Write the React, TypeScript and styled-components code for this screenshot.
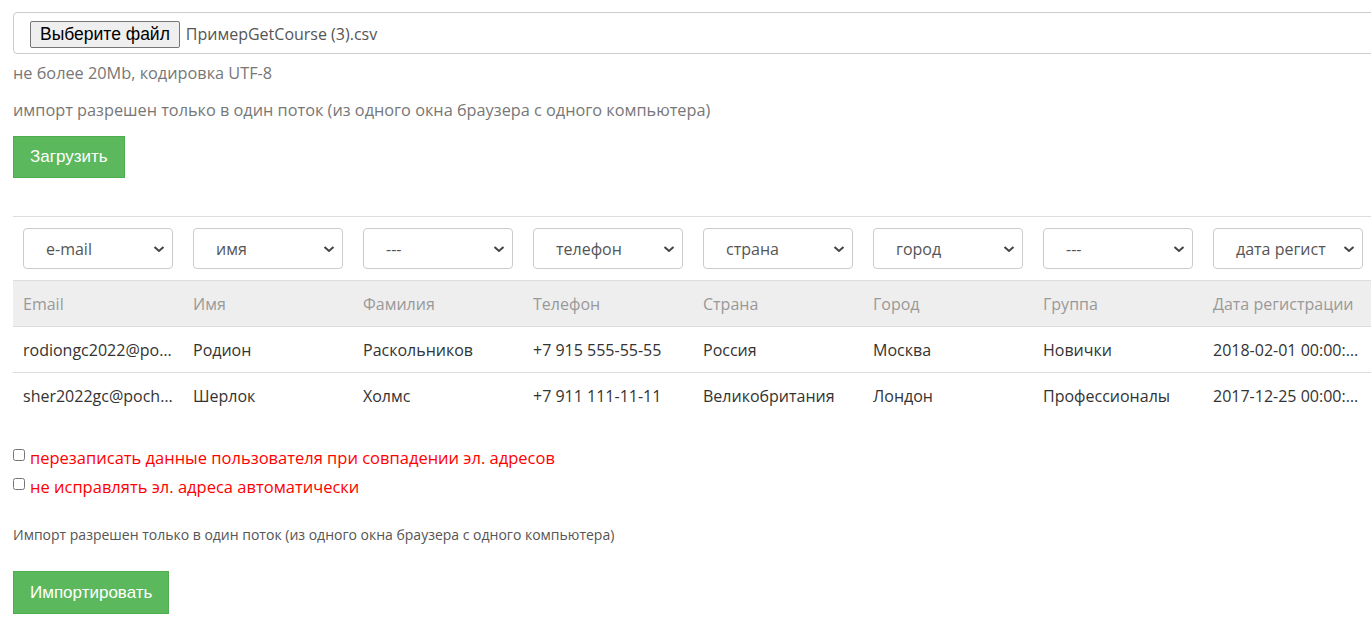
import styled, { createGlobalStyle } from 'styled-components'

const GlobalStyle = createGlobalStyle`
  html, body {
    margin: 0;
    padding: 0;
    background: #fff;
    overflow: hidden;
  }
  body {
    font-family: "Open Sans", Lato, sans-serif;
    font-size: 16px;
    color: #333;
  }
`

const Page = styled.div`
  padding: 12px 0 10px 13px;
  width: 1400px;
`

const FileBox = styled.div`
  display: flex;
  align-items: center;
  gap: 6px;
  height: 42px;
  box-sizing: border-box;
  padding: 0 16px;
  border: 1px solid #ccc;
  border-radius: 4px;
`

const FileButton = styled.button`
  font-family: "Liberation Sans", Arial, sans-serif;
  font-size: 17.5px;
  color: #000;
  background: #efefef;
  border: 1px solid #767676;
  border-radius: 2px;
  height: 27px;
  padding: 0 9px;
  margin-top: 3px;
`

const FileName = styled.span`
  color: #555;
  margin-top: 2px;
`

const Hint = styled.p<{ $small?: boolean }>`
  margin: 0;
  color: ${(p) => (p.$small ? '#555' : '#777')};
  font-size: ${(p) => (p.$small ? '14px' : '16.3px')};
`

const Green = styled.button<{ $tall?: boolean }>`
  font-family: "Liberation Sans", Arial, sans-serif;
  font-size: 17px;
  color: #fff;
  background: #5cb85c;
  border: 1px solid #4cae4c;
  height: ${(p) => (p.$tall ? '43px' : '42px')};
  padding: 0 16px;
  cursor: pointer;
`

const Divider = styled.hr`
  border: 0;
  border-top: 1px solid #ddd;
  margin: 38px 0 0;
`

const Table = styled.table`
  border-collapse: collapse;
  table-layout: fixed;
  width: 1360px;
`

const SelectCell = styled.td`
  padding: 11px 10px;
`

const SelectBox = styled.div`
  position: relative;
  display: flex;
  align-items: center;
  height: 41px;
  box-sizing: border-box;
  padding-left: 22px;
  border: 1px solid #ccc;
  border-radius: 4px;
  color: #555;
  background: #fff;
  svg {
    position: absolute;
    right: 7px;
    top: 15px;
  }
`

const Th = styled.th`
  background: #eee;
  color: #999;
  font-weight: 400;
  text-align: left;
  height: 45px;
  padding: 0 10px;
  border-top: 1px solid #ddd;
`

const Td = styled.td`
  height: 45px;
  padding: 0 10px;
  border-top: 1px solid #ddd;
  white-space: nowrap;
  overflow: hidden;
  text-overflow: ellipsis;
`

const Options = styled.div`
  margin-top: 28px;
  display: flex;
  flex-direction: column;
  gap: 6px;
`

const CheckRow = styled.label`
  display: flex;
  align-items: center;
  gap: 5px;
  color: #f00;
  font-size: 16.5px;
  input {
    margin: 0;
    width: 12px;
    height: 12px;
    align-self: flex-start;
    margin-top: 3px;
  }
`

const Chevron = () => (
  <svg width="12" height="10" viewBox="0 0 12 10">
    <path d="M1.5 3 L6 7 L10.5 3" fill="none" stroke="#444" strokeWidth="2" />
  </svg>
)

const selects = ['e-mail', 'имя', '---', 'телефон', 'страна', 'город', '---', 'дата регист']
const headers = ['Email', 'Имя', 'Фамилия', 'Телефон', 'Страна', 'Город', 'Группа', 'Дата регистрации']
const rows = [
  ['rodiongc2022@pochta.ru', 'Родион', 'Раскольников', '+7 915 555-55-55', 'Россия', 'Москва', 'Новички', '2018-02-01 00:00:00'],
  ['sher2022gc@pochta.ru', 'Шерлок', 'Холмс', '+7 911 111-11-11', 'Великобритания', 'Лондон', 'Профессионалы', '2017-12-25 00:00:00'],
]

export default function App() {
  return (
    <>
      <GlobalStyle />
      <Page>
        <FileBox>
          <FileButton>Выберите файл</FileButton>
          <FileName>ПримерGetCourse (3).csv</FileName>
        </FileBox>
        <Hint style={{ marginTop: 8 }}>не более 20Mb, кодировка UTF-8</Hint>
        <Hint style={{ marginTop: 15 }}>импорт разрешен только в один поток (из одного окна браузера с одного компьютера)</Hint>
        <Green style={{ marginTop: 15 }}>Загрузить</Green>
        <Divider />
        <Table>
          <tbody>
            <tr>
              {selects.map((s, i) => (
                <SelectCell key={i}>
                  <SelectBox>
                    {s}
                    <Chevron />
                  </SelectBox>
                </SelectCell>
              ))}
            </tr>
            <tr>
              {headers.map((h) => (
                <Th key={h}>{h}</Th>
              ))}
            </tr>
            {rows.map((r, i) => (
              <tr key={i}>
                {r.map((c, j) => (
                  <Td key={j}>{c}</Td>
                ))}
              </tr>
            ))}
          </tbody>
        </Table>
        <Options>
          <CheckRow>
            <input type="checkbox" />
            перезаписать данные пользователя при совпадении эл. адресов
          </CheckRow>
          <CheckRow>
            <input type="checkbox" />
            не исправлять эл. адреса автоматически
          </CheckRow>
        </Options>
        <Hint $small style={{ marginTop: 27 }}>
          Импорт разрешен только в один поток (из одного окна браузера с одного компьютера)
        </Hint>
        <Green $tall style={{ marginTop: 27 }}>Импортировать</Green>
      </Page>
    </>
  )
}
